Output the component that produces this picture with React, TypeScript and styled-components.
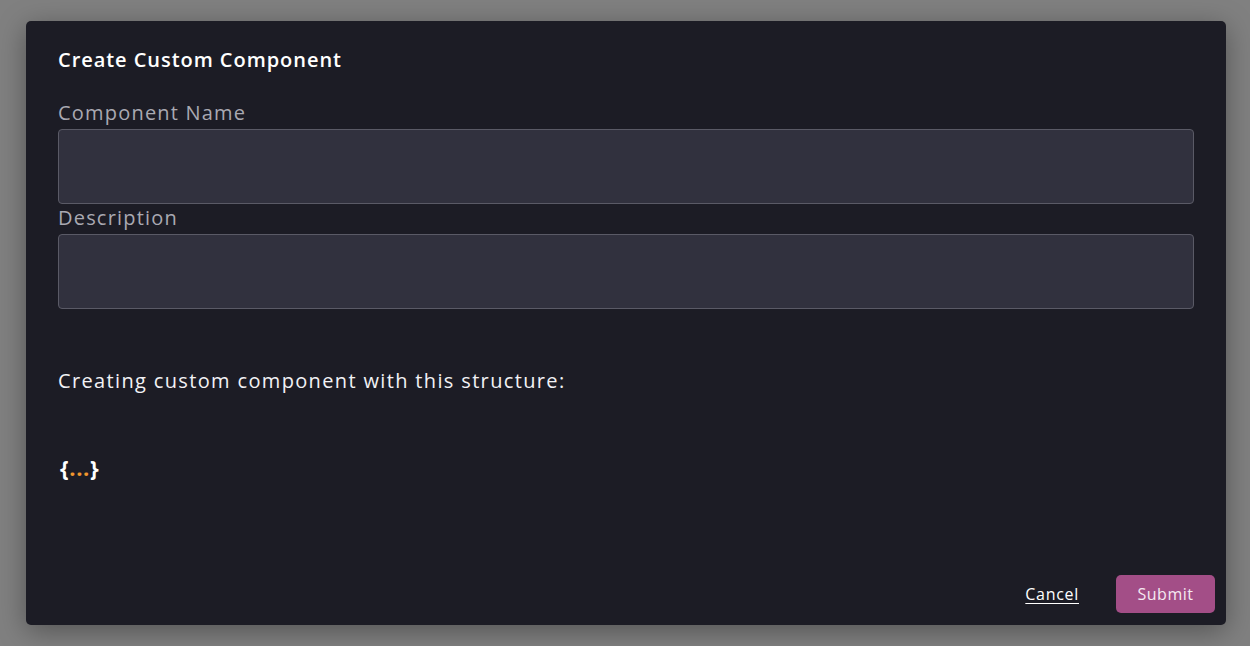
import React from 'react';
import styled, { createGlobalStyle } from 'styled-components';

const GlobalStyle = createGlobalStyle`
  html, body {
    margin: 0;
    padding: 0;
    height: 100%;
  }
  body {
    background: #808080;
    font-family: 'Open Sans', 'Liberation Sans', sans-serif;
  }
  #root {
    height: 100%;
  }
`;

const Backdrop = styled.div`
  width: 1250px;
  height: 646px;
  background: #808080;
  padding: 21px 0 0 26px;
  box-sizing: border-box;
`;

const Dialog = styled.div`
  width: 1200px;
  height: 604px;
  box-sizing: border-box;
  background: #1c1c25;
  border-radius: 5px;
  box-shadow: 0 6px 28px rgba(0, 0, 0, 0.35);
  padding: 27px 32px 12px 32px;
  display: flex;
  flex-direction: column;
  color: #ffffff;
`;

const Title = styled.h2`
  margin: 0;
  font-size: 20px;
  line-height: 24px;
  font-weight: 600;
  letter-spacing: 0.95px;
  color: #ffffff;
`;

const Field = styled.div<{ $first?: boolean }>`
  display: flex;
  flex-direction: column;
  margin-top: ${(p) => (p.$first ? '29px' : '2px')};
`;

const Label = styled.label`
  font-size: 20px;
  line-height: 24px;
  letter-spacing: 1.2px;
  color: #a9a9b2;
  margin-bottom: 4px;
`;

const Input = styled.input`
  height: 75px;
  box-sizing: border-box;
  width: 1136px;
  background: #31313e;
  border: 1px solid #5a5a66;
  border-radius: 4px;
  color: #ffffff;
  font-family: inherit;
  font-size: 18px;
  padding: 0 14px;
  outline: none;
`;

const Intro = styled.p`
  margin: 60px 0 0;
  font-size: 20px;
  line-height: 24px;
  letter-spacing: 1.35px;
  color: #f2f2f5;
`;

const Structure = styled.div`
  margin-top: 62px;
  font-size: 22px;
  line-height: 24px;
  font-weight: 700;
  letter-spacing: 0.6px;
  color: #ffffff;
  padding-left: 2px;
`;

const Dots = styled.span`
  color: #f0962e;
`;

const Footer = styled.div`
  margin-top: auto;
  margin-right: -21px;
  display: flex;
  justify-content: flex-end;
  align-items: center;
  gap: 37px;
`;

const CancelLink = styled.a`
  color: #ffffff;
  font-size: 16px;
  letter-spacing: 0.7px;
  text-decoration: underline;
  text-underline-offset: 3px;
  cursor: pointer;
`;

const SubmitButton = styled.button`
  width: 99px;
  height: 38px;
  border: none;
  border-radius: 5px;
  background: #a34e87;
  color: #f5e9f1;
  font-family: inherit;
  font-size: 16px;
  letter-spacing: 0.5px;
  cursor: pointer;
`;

export default function App() {
  return (
    <>
      <GlobalStyle />
      <Backdrop>
        <Dialog>
          <Title>Create Custom Component</Title>
          <Field $first>
            <Label>Component Name</Label>
            <Input />
          </Field>
          <Field>
            <Label>Description</Label>
            <Input />
          </Field>
          <Intro>Creating custom component with this structure:</Intro>
          <Structure>
            {'{'}
            <Dots>...</Dots>
            {'}'}
          </Structure>
          <Footer>
            <CancelLink>Cancel</CancelLink>
            <SubmitButton>Submit</SubmitButton>
          </Footer>
        </Dialog>
      </Backdrop>
    </>
  );
}
